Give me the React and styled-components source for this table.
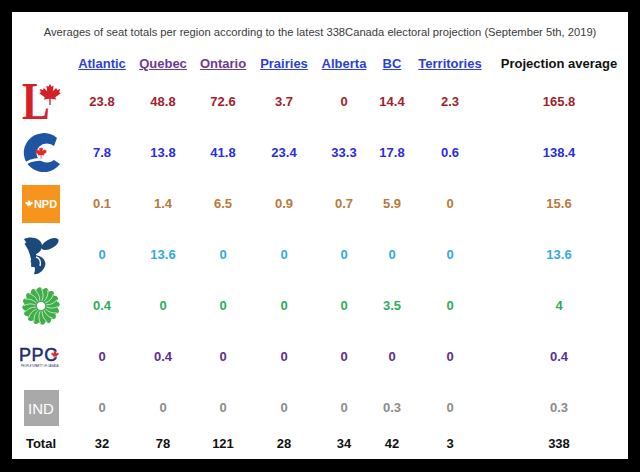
import React from "react";
import styled, { createGlobalStyle } from "styled-components";

const GlobalStyle = createGlobalStyle`
  html, body {
    margin: 0;
    padding: 0;
    background: #000000;
  }
  body {
    font-family: "Liberation Sans", Arial, sans-serif;
  }
`;

const Frame = styled.div`
  width: 640px;
  height: 472px;
  padding: 12px 12px 13px;
  box-sizing: border-box;
  background: #000000;
`;

const Panel = styled.div`
  width: 616px;
  height: 447px;
  background: #ffffff;
  display: flex;
  flex-direction: column;
`;

const Caption = styled.div`
  height: 38px;
  display: flex;
  align-items: center;
  justify-content: center;
  padding-top: 1px;
  box-sizing: border-box;
  font-size: 11.2px;
  color: #3a3a3a;
  white-space: nowrap;
`;

const Table = styled.div`
  display: grid;
  grid-template-columns: 58px 64px 58px 62px 60px 60px 36px 80px 138px;
  grid-template-rows: 26px repeat(7, 51px) 20px;
  align-items: center;
  justify-items: center;
`;

const HeadLink = styled.a`
  font-size: 13px;
  font-weight: bold;
  color: ${(p) => (p.$visited ? "#6c3b91" : "#2b3fd6")};
  text-decoration: underline;
  cursor: pointer;
`;

const HeadPlain = styled.span`
  font-size: 13px;
  font-weight: bold;
  color: #111111;
`;

const Num = styled.span`
  font-size: 13px;
  font-weight: bold;
  color: ${(p) => p.$color};
`;

const LogoBox = styled.div`
  display: flex;
  align-items: center;
  justify-content: center;
  width: 100%;
  height: 100%;

  svg {
    overflow: visible;
  }
`;

const NdpSquare = styled.div`
  width: 38px;
  height: 38px;
  background: #f7941d;
  display: flex;
  align-items: center;
  justify-content: center;
  gap: 1px;
  color: #ffffff;
  font-size: 11px;
  font-weight: bold;
`;

const IndSquare = styled.div`
  width: 35px;
  height: 36px;
  margin-top: 1px;
  background: #a9a9a9;
  display: flex;
  align-items: center;
  justify-content: center;
  color: #ffffff;
  font-size: 15px;
`;

const LEAF =
  "M0,-48 L7,-36 L16,-41 L12,-16 L27,-31 L31,-22 L45,-26 L40,-12 L47,-8 L23,10 L27,20 L3,16 L3,44 L-3,44 L-3,16 L-27,20 L-23,10 L-47,-8 L-40,-12 L-45,-26 L-31,-22 L-27,-31 L-12,-16 L-16,-41 L-7,-36 Z";

const Leaf = ({ x, y, size, color }) => (
  <path d={LEAF} fill={color} transform={`translate(${x} ${y}) scale(${size / 96})`} />
);

const LiberalLogo = () => (
  <svg width="40" height="38" viewBox="0 0 40 38">
    <g transform="translate(1 36) scale(0.8 1)">
      <text
        x="0"
        y="0"
        fontFamily="Liberation Serif, serif"
        fontWeight="bold"
        fontSize="52"
        fill="#d5202a"
      >
        L
      </text>
    </g>
    <Leaf x={29} y={12} size={22} color="#d5202a" />
  </svg>
);

const ConservativeLogo = () => (
  <svg width="42" height="40" viewBox="0 0 42 40">
    <path
      d="M37,5 A20,19.5 0 1 0 40,31 L34,27 A10.5,9.5 0 1 1 34,13 Z"
      fill="#1d55a3"
    />
    <path d="M2,33 Q14,23 29,28" stroke="#ffffff" strokeWidth="2.6" fill="none" />
    <Leaf x={21} y={20} size={12} color="#e02a2a" />
  </svg>
);

const NdpLogo = () => (
  <NdpSquare>
    <svg width="8" height="8" viewBox="0 0 8 8">
      <Leaf x={4} y={4} size={8} color="#ffffff" />
    </svg>
    <span>NPD</span>
  </NdpSquare>
);

const BlocLogo = () => (
  <svg width="36" height="40" viewBox="0 0 36 40">
    <ellipse cx="27" cy="9" rx="9.5" ry="4.5" transform="rotate(-28 27 9)" fill="#1b4a7a" />
    <path
      d="M1,4 C9,0 20,4 19,12 C18,17 14,19 11,20 C18,20 24,25 22,31 C20,37 14,40 11,39 C13,34 12,29 7,26 C12,25 14,22 12,19 C9,15 5,11 1,4 Z"
      fill="#1b4a7a"
    />
    <path d="M4,7 C9,14 12,22 11,32" stroke="#1b4a7a" strokeWidth="6" fill="none" />
    <path d="M13,22 C17,23 18,27 17,31" stroke="#ffffff" strokeWidth="1.4" fill="none" />
  </svg>
);

const GreenLogo = () => (
  <svg width="38" height="38" viewBox="-19 -19 38 38">
    {Array.from({ length: 16 }).map((_, i) => (
      <g key={i} transform={`rotate(${i * 22.5})`}>
        <ellipse cx="3" cy="-11" rx="4" ry="7.5" transform="rotate(24 3 -11)" fill="#3fae49" />
      </g>
    ))}
    {Array.from({ length: 16 }).map((_, i) => (
      <path
        key={i}
        d="M2,-5 Q6,-10 4,-17"
        stroke="#ffffff"
        strokeWidth="0.6"
        fill="none"
        transform={`rotate(${i * 22.5 + 10})`}
      />
    ))}
    <circle cx="0" cy="0" r="3" fill="#ffffff" />
  </svg>
);

const PpcLogo = () => (
  <svg width="44" height="26" viewBox="0 0 44 26">
    <text
      x="0"
      y="17"
      fontFamily="Liberation Sans, sans-serif"
      fontSize="18"
      fill="#232b77"
      stroke="#232b77"
      strokeWidth="0.5"
      letterSpacing="0.6"
    >
      PPC
    </text>
    <Leaf x={36} y={11} size={8} color="#e02a2a" />
    <text x="2" y="23" fontFamily="Liberation Sans, sans-serif" fontSize="2.6" fill="#232b77">
      PEOPLE'S PARTY OF CANADA
    </text>
  </svg>
);

const IndLogo = () => <IndSquare>IND</IndSquare>;

const regions = [
  { name: "Atlantic", visited: false },
  { name: "Quebec", visited: true },
  { name: "Ontario", visited: true },
  { name: "Prairies", visited: false },
  { name: "Alberta", visited: false },
  { name: "BC", visited: false },
  { name: "Territories", visited: false },
];

const parties = [
  { key: "lpc", Logo: LiberalLogo, color: "#a3212b", values: ["23.8", "48.8", "72.6", "3.7", "0", "14.4", "2.3", "165.8"] },
  { key: "cpc", Logo: ConservativeLogo, color: "#2a2ce6", values: ["7.8", "13.8", "41.8", "23.4", "33.3", "17.8", "0.6", "138.4"] },
  { key: "ndp", Logo: NdpLogo, color: "#b97a3a", values: ["0.1", "1.4", "6.5", "0.9", "0.7", "5.9", "0", "15.6"] },
  { key: "bq", Logo: BlocLogo, color: "#35a9de", values: ["0", "13.6", "0", "0", "0", "0", "0", "13.6"] },
  { key: "gpc", Logo: GreenLogo, color: "#2eae5a", values: ["0.4", "0", "0", "0", "0", "3.5", "0", "4"] },
  { key: "ppc", Logo: PpcLogo, color: "#5c2e91", values: ["0", "0.4", "0", "0", "0", "0", "0", "0.4"] },
  { key: "ind", Logo: IndLogo, color: "#8c8c8c", values: ["0", "0", "0", "0", "0", "0.3", "0", "0.3"] },
];

const totals = ["32", "78", "121", "28", "34", "42", "3", "338"];

export default function App() {
  return (
    <>
      <GlobalStyle />
      <Frame>
        <Panel>
          <Caption>
            Averages of seat totals per region according to the latest 338Canada electoral projection (September 5th, 2019)
          </Caption>
          <Table>
            <span />
            {regions.map((r) => (
              <HeadLink key={r.name} $visited={r.visited}>
                {r.name}
              </HeadLink>
            ))}
            <HeadPlain>Projection average</HeadPlain>

            {parties.map(({ key, Logo, color, values }) => (
              <React.Fragment key={key}>
                <LogoBox>
                  <Logo />
                </LogoBox>
                {values.map((v, i) => (
                  <Num key={i} $color={color}>
                    {v}
                  </Num>
                ))}
              </React.Fragment>
            ))}

            <HeadPlain>Total</HeadPlain>
            {totals.map((t, i) => (
              <HeadPlain key={i}>{t}</HeadPlain>
            ))}
          </Table>
        </Panel>
      </Frame>
    </>
  );
}
